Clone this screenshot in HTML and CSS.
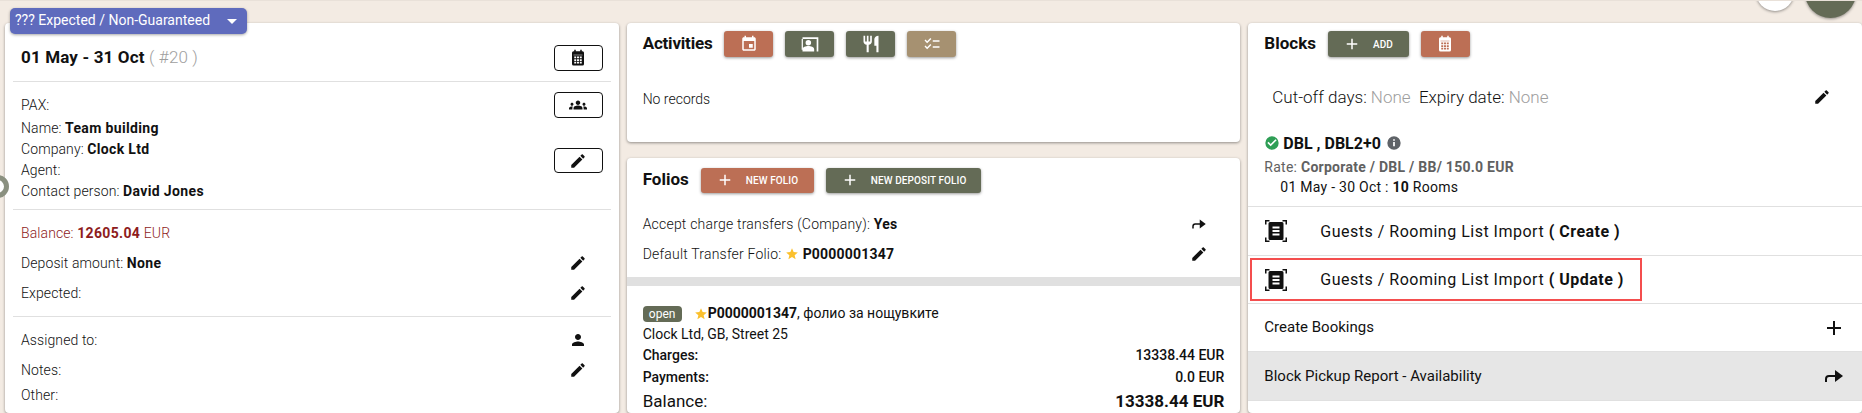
FILE: index.html
```html
<!DOCTYPE html>
<html lang="en">
<head>
<meta charset="utf-8">
<title>Group reservation</title>
<link rel="stylesheet" href="styles.css">
</head>
<body>
<svg class="defs" aria-hidden="true">
  <symbol id="i-edit" viewBox="0 0 24 24"><path d="M3 17.25V21h3.75L17.81 9.94l-3.75-3.75L3 17.25zM20.71 7.04c.39-.39.39-1.02 0-1.41l-2.34-2.34c-.39-.39-1.02-.39-1.41 0l-1.83 1.83 3.75 3.75 1.83-1.83z"/></symbol>
  <symbol id="i-person" viewBox="0 0 24 24"><path d="M12 12c2.21 0 4-1.79 4-4s-1.79-4-4-4-4 1.79-4 4 1.79 4 4 4zm0 2c-2.67 0-8 1.34-8 4v2h16v-2c0-2.66-5.33-4-8-4z"/></symbol>
  <symbol id="i-groups" viewBox="0 0 24 24"><path d="M12 12.75c1.63 0 3.07.39 4.24.9 1.08.48 1.76 1.56 1.76 2.73V18H6v-1.61c0-1.18.68-2.26 1.76-2.73 1.17-.52 2.61-.91 4.24-.91zM4 13c1.1 0 2-.9 2-2s-.9-2-2-2-2 .9-2 2 .9 2 2 2zm1.13 1.1c-.37-.06-.74-.1-1.13-.1-.99 0-1.93.21-2.78.58C.48 14.9 0 15.62 0 16.43V18h4.5v-1.61c0-.83.23-1.61.63-2.29zM20 13c1.1 0 2-.9 2-2s-.9-2-2-2-2 .9-2 2 .9 2 2 2zm4 3.43c0-.81-.48-1.53-1.22-1.85-.85-.37-1.79-.58-2.78-.58-.39 0-.76.04-1.13.1.4.68.63 1.46.63 2.29V18H24v-1.57zM12 6c1.66 0 3 1.34 3 3s-1.34 3-3 3-3-1.34-3-3 1.34-3 3-3z"/></symbol>
  <symbol id="i-month" viewBox="0 0 24 24"><path fill-rule="evenodd" d="M7 1h2v2h6V1h2v2h1a2 2 0 0 1 2 2v15a2 2 0 0 1-2 2H6a2 2 0 0 1-2-2V5a2 2 0 0 1 2-2h1zM6 7.500v.8h12v-.8zM7 10h2.600v2.400H7zM10.700 10h2.600v2.400h-2.600zM14.400 10H17v2.400h-2.600zM7 13.500h2.600v2.400H7zM10.700 13.500h2.600v2.400h-2.600zM14.400 13.500H17v2.400h-2.600zM7 17h2.600v2.400H7zM10.700 17h2.600v2.400h-2.600zM14.400 17H17v2.400h-2.600z"/></symbol>
  <symbol id="i-event" viewBox="0 0 24 24"><path d="M17 12h-5v5h5v-5zM16 1v2H8V1H6v2H5c-1.110 0-1.990.9-1.990 2L3 19c0 1.100.89 2 2 2h14c1.100 0 2-.9 2-2V5c0-1.100-.9-2-2-2h-1V1h-2zm3 18H5V8h14v11z"/></symbol>
  <symbol id="i-contact" viewBox="0 0 24 24"><path d="M3 4h19v17h-2V6H3z"/><circle cx="10" cy="10.500" r="3.300"/><path d="M3 21v-2.500c0-2.800 4-4 7-4s7 1.200 7 4V21z"/><path d="M2 6h1.500v13H2z"/></symbol>
  <symbol id="i-food" viewBox="0 0 24 24"><path d="M11 9H9V2H7v7H5V2H3v7c0 2.120 1.660 3.840 3.750 3.970V22h2.500v-9.030C11.340 12.840 13 11.120 13 9V2h-2v7zm5-3v8h2.500v8H21V2c-2.760 0-5 2.240-5 4z"/></symbol>
  <symbol id="i-check" viewBox="0 0 24 24"><path d="M22 7h-9v2h9V7zm0 8h-9v2h9v-2zM5.540 11 2 7.460l1.410-1.410 2.120 2.120 4.240-4.240 1.410 1.410L5.540 11zm0 8L2 15.460l1.410-1.410 2.120 2.120 4.240-4.240 1.410 1.410L5.540 19z"/></symbol>
  <symbol id="i-plus" viewBox="0 0 24 24"><path d="M19 13h-6v6h-2v-6H5v-2h6V5h2v6h6v2z"/></symbol>
  <symbol id="i-turn" viewBox="0 0 24 24"><path d="M3 18v-3a4 4 0 0 1 4-4h7v2H7a2 2 0 0 0-2 2v3z"/><path d="M13 6l8 6-8 6z"/></symbol>
  <symbol id="i-star" viewBox="0 0 24 24"><path d="M12 17.270 18.180 21l-1.640-7.030L22 9.240l-7.190-.61L12 2 9.190 8.630 2 9.240l5.460 4.730L5.820 21z"/></symbol>
  <symbol id="i-ok" viewBox="0 0 24 24"><path d="M12 2a10 10 0 1 0 0 20 10 10 0 0 0 0-20zm-2 15-5-5 1.800-1.800L10 13.400l7.200-7.200L19 8z"/></symbol>
  <symbol id="i-info" viewBox="0 0 24 24"><path d="M12 2a10 10 0 1 0 0 20 10 10 0 0 0 0-20zm1.300 15h-2.600v-6.500h2.600zm0-8.200h-2.600V6.300h2.600z"/></symbol>
  <symbol id="i-scan" viewBox="0 0 24 24"><path d="M1 5.500V1h4.500v1.500h-3v3zM18.500 1H23v4.500h-1.500v-3h-3zM1 18.500h1.500v3h3V23H1zM21.500 18.500H23V23h-4.500v-1.500h3z"/><path fill-rule="evenodd" d="M6 3h12a1.500 1.500 0 0 1 1.500 1.500v15A1.500 1.500 0 0 1 18 21H6a1.500 1.500 0 0 1-1.500-1.500v-15A1.500 1.500 0 0 1 6 3zm2.500 4.500v2h7v-2zm0 3.500v2h7v-2zm0 3.500v2h7v-2z"/></symbol>
</svg>

<div class="ring"></div>
<div class="fab fab-white"></div>
<div class="fab fab-green"></div>
<div class="status">??? Expected / Non-Guaranteed <span class="caret"></span></div>

<main class="board">
  <section class="col">
    <article class="card card-full">
      <header class="head">
        <h2 class="title">01 May - 31 Oct <span class="muted">( #20 )</span></h2>
        <button class="outline"><svg class="ico18"><use href="#i-month"/></svg></button>
      </header>
      <div class="block block-a">
        <div class="row row-pax"><span>PAX:</span><button class="outline"><svg class="ico18"><use href="#i-groups"/></svg></button></div>
        <div class="split">
          <div>
            <div class="line">Name: <b>Team building</b></div>
            <div class="line">Company: <b>Clock Ltd</b></div>
            <div class="line">Agent:</div>
            <div class="line">Contact person: <b>David Jones</b></div>
          </div>
          <button class="outline outline-edit"><svg class="ico18"><use href="#i-edit"/></svg></button>
        </div>
      </div>
      <div class="block block-b">
        <div class="row row30 red"><span>Balance: <b>12605.04</b> EUR</span></div>
        <div class="row row30"><span>Deposit amount: <b>None</b></span><svg class="ico18 act"><use href="#i-edit"/></svg></div>
        <div class="row row30"><span>Expected:</span><svg class="ico18 act"><use href="#i-edit"/></svg></div>
      </div>
      <div class="block block-c">
        <div class="row row30"><span>Assigned to:</span><svg class="ico18 act"><use href="#i-person"/></svg></div>
        <div class="row row30"><span>Notes:</span><svg class="ico18 act"><use href="#i-edit"/></svg></div>
        <div class="line">Other:</div>
      </div>
    </article>
  </section>

  <section class="col">
    <article class="card card-act">
      <header class="bar">
        <h3 class="bar-title bar-title-tight">Activities</h3>
        <button class="fill terra"><svg class="ico18"><use href="#i-event"/></svg></button>
        <button class="fill moss"><svg class="ico20"><use href="#i-contact"/></svg></button>
        <button class="fill moss"><svg class="ico20"><use href="#i-food"/></svg></button>
        <button class="fill tan"><svg class="ico18"><use href="#i-check"/></svg></button>
      </header>
      <p class="empty">No records</p>
    </article>
    <article class="card card-fol">
      <header class="bar bar-fol">
        <h3 class="bar-title">Folios</h3>
        <button class="fill wide terra wide-a"><svg class="ico18"><use href="#i-plus"/></svg><span>NEW FOLIO</span></button>
        <button class="fill wide moss wide-b"><svg class="ico18"><use href="#i-plus"/></svg><span>NEW DEPOSIT FOLIO</span></button>
      </header>
      <div class="transfers">
        <div class="row row30"><span>Accept charge transfers (Company): <b>Yes</b></span><svg class="ico18"><use href="#i-turn"/></svg></div>
        <div class="row row30"><span>Default Transfer Folio: <svg class="ico14 star"><use href="#i-star"/></svg> <b>P0000001347</b></span><svg class="ico18"><use href="#i-edit"/></svg></div>
      </div>
      <div class="folio">
        <div class="f-top"><span class="pill">open</span><svg class="ico14 star"><use href="#i-star"/></svg><span><b>P0000001347</b>, фолио за нощувките</span></div>
        <div class="f-addr">Clock Ltd, GB, Street 25</div>
        <div class="f-row"><b class="medium">Charges:</b><span class="medium">13338.44 EUR</span></div>
        <div class="f-row"><b class="medium">Payments:</b><span class="medium">0.0 EUR</span></div>
        <div class="f-row f-big"><span>Balance:</span><b>13338.44 EUR</b></div>
      </div>
    </article>
  </section>

  <section class="col">
    <article class="card card-full">
      <header class="bar">
        <h3 class="bar-title">Blocks</h3>
        <button class="fill wide moss wide-c"><svg class="ico18"><use href="#i-plus"/></svg><span>ADD</span></button>
        <button class="fill terra"><svg class="ico18"><use href="#i-month"/></svg></button>
      </header>
      <div class="cutoff">
        <span>Cut-off days: <em>None</em>&nbsp; Expiry date: <em>None</em></span>
        <svg class="ico18"><use href="#i-edit"/></svg>
      </div>
      <div class="rate-head"><svg class="ico16 ok"><use href="#i-ok"/></svg><strong>DBL , DBL2+0</strong><svg class="ico16 info"><use href="#i-info"/></svg></div>
      <div class="rate">Rate: <b>Corporate / DBL / BB/ 150.0 EUR</b></div>
      <div class="dates">01 May - 30 Oct : <b>10</b> Rooms</div>
      <ul class="menu">
        <li class="item item-first"><svg class="ico24"><use href="#i-scan"/></svg><span class="item-text">Guests / Rooming List Import <b>( Create )</b></span></li>
        <li class="item item-mark"><svg class="ico24"><use href="#i-scan"/></svg><span class="item-text">Guests / Rooming List Import <b>( Update )</b></span><i class="redbox"></i></li>
        <li class="item item-between"><span>Create Bookings</span><svg class="ico24"><use href="#i-plus"/></svg></li>
        <li class="item item-between item-hover"><span>Block Pickup Report - Availability</span><svg class="ico24"><use href="#i-turn"/></svg></li>
      </ul>
    </article>
  </section>
</main>
</body>
</html>
```

FILE: styles.css
```css
* { box-sizing: border-box; }

html, body {
  margin: 0;
  height: 413px;
  overflow: hidden;
}

body {
  position: relative;
  background: #f3ebe3;
  border-top: 1px solid #e9e1d9;
  color: #111;
  font: 300 14px/21px Roboto, "Noto Sans", sans-serif;
}

.defs { display: none; }

b, strong { font-weight: 700; }
b.medium, .medium { font-weight: 500; }

svg { fill: currentColor; flex: none; }
.ico14 { width: 14px; height: 14px; vertical-align: -2px; }
.ico16 { width: 16px; height: 16px; }
.ico18 { width: 18px; height: 18px; }
.ico20 { width: 20px; height: 20px; }
.ico24 { width: 24px; height: 24px; }

button {
  display: inline-flex;
  align-items: center;
  justify-content: center;
  padding: 0;
  font: inherit;
  cursor: pointer;
}

/* floating bits */
.status {
  position: absolute;
  z-index: 3;
  left: 10px;
  top: 7px;
  width: 237px;
  height: 26px;
  padding-left: 5px;
  background: #5f6bbd;
  border-radius: 5px;
  box-shadow: 0 1px 3px rgba(0, 0, 0, .35);
  color: #fff;
  font-weight: 400;
  line-height: 25px;
  white-space: nowrap;
}

.caret {
  display: inline-block;
  margin-left: 13px;
  border: 5px solid transparent;
  border-top-color: #fff;
  border-bottom-width: 0;
  vertical-align: middle;
}

.ring {
  position: absolute;
  z-index: 3;
  left: -14px;
  top: 174px;
  width: 23px;
  height: 23px;
  border: 5px solid #8a9080;
  border-radius: 50%;
  background: #fff;
}

.fab {
  position: absolute;
  border-radius: 50%;
  box-shadow: 0 1px 3px rgba(0, 0, 0, .4);
}
.fab-white { left: 1756px; top: -28px; width: 38px; height: 38px; background: #fff; }
.fab-green { left: 1805px; top: -34px; width: 51px; height: 51px; background: #646b56; }

/* board */
.board {
  display: grid;
  grid-template-columns: repeat(3, minmax(0, 1fr));
  column-gap: 8px;
  align-items: start;
  padding: 22px 0 0 5px;
}

.col { display: flex; flex-direction: column; gap: 16px; }

.card {
  background: #fff;
  border-radius: 4px;
  box-shadow: 0 1px 3px rgba(0, 0, 0, .4);
}
.card-full { height: 390px; }
.card-act { height: 119px; }
.card-fol { height: 255px; }

/* left card */
.head {
  display: flex;
  align-items: center;
  justify-content: space-between;
  margin: 0 8px;
  padding: 22px 8px 10px 8px;
  border-bottom: 1px solid #e0e0e0;
}

.title { margin: 0 0 2px; font-size: 17px; font-weight: 700; line-height: 24px; letter-spacing: .15px; color: #111; }
.muted { font-weight: 300; color: #9e9e9e; }

.outline {
  width: 49px;
  height: 26px;
  background: #fff;
  border: 1px solid #111;
  border-radius: 4px;
  color: #111;
}
.outline-edit { height: 25px; margin-top: 30px; }

.block {
  margin: 0 8px;
  padding-left: 8px;
  padding-right: 8px;
  border-bottom: 1px solid #e0e0e0;
  letter-spacing: .1px;
}
.block b { letter-spacing: .35px; }
.block-a { padding-top: 10px; padding-bottom: 7px; }
.block-b { padding-top: 8px; padding-bottom: 8px; }
.block-c { padding-top: 8px; border-bottom: 0; }

.row { display: flex; align-items: center; justify-content: space-between; }
.row-pax { height: 26px; }
.row30 { height: 30px; }
.split { display: flex; align-items: flex-start; justify-content: space-between; }
.line { height: 21px; }
.red { color: #8e1c1c; }
.act { margin-right: 16px; }

/* middle card */
.bar { display: flex; align-items: center; gap: 12px; padding: 8px 0 0 16px; }
.bar-title { margin: 0 0 2px; font-size: 17px; font-weight: 700; line-height: 24px; color: #111; }
.bar-title-tight { letter-spacing: -.2px; }
.bar-fol { padding-top: 9px; }

.fill {
  width: 49px;
  height: 26px;
  border: 0;
  border-radius: 3px;
  box-shadow: 0 1px 3px rgba(0, 0, 0, .4);
  color: #fff;
}
.terra { background: #bc6f55; }
.moss { background: #646b56; }
.tan { background: #a69171; }

.wide { height: 25px; justify-content: flex-start; gap: 12px; padding-left: 15px; font-size: 10px; font-weight: 500; letter-spacing: .1px; }
.wide-a { width: 113px; }
.wide-b { width: 155px; }
.wide-c { width: 81px; height: 26px; }

.empty { margin: 0; padding: 32px 0 0 16px; }

.transfers { padding: 16px 32px 0 16px; letter-spacing: .2px; }
.star { fill: #fbc02d; }

.folio { margin-top: 8px; padding: 17px 16px 0; border-top: 9px solid #e0e0e0; }
.f-top { display: flex; align-items: center; height: 21px; font-weight: 400; }
.pill {
  width: 39px;
  height: 16px;
  margin-right: 12px;
  background: #646b56;
  border-radius: 4px;
  color: #fff;
  font-size: 12px;
  line-height: 16px;
  text-align: center;
}
.f-addr { height: 20px; font-weight: 400; }
.f-row { display: flex; justify-content: space-between; height: 22px; line-height: 22px; }
.f-big { margin-top: 1px; font-size: 17px; font-weight: 400; line-height: 24px; height: 24px; }

/* right card */
.cutoff {
  display: flex;
  align-items: center;
  justify-content: space-between;
  height: 26px;
  margin-top: 27px;
  padding: 0 31px 0 24px;
  font-size: 17px;
}
.cutoff em { font-style: normal; color: #9e9e9e; }

.rate-head { display: flex; align-items: center; gap: 3px; height: 24px; margin-top: 21px; margin-bottom: 1px; padding-left: 16px; }
.rate-head strong { margin-right: 2px; font-size: 16px; }
.ok { fill: #2e9e55; }
.info { fill: #5f6368; }
.rate { height: 22px; padding-left: 16px; line-height: 22px; color: #616161; font-weight: 400; letter-spacing: .26px; }
.dates { height: 19px; padding-left: 32px; line-height: 19px; font-weight: 400; letter-spacing: .26px; }

.menu { margin: 9px 0 0; padding: 0; list-style: none; border-top: 1px solid #e0e0e0; }
.item {
  position: relative;
  display: flex;
  align-items: center;
  height: 48px;
  padding: 0 16px;
  border-bottom: 1px solid #e0e0e0;
  font-weight: 400;
  font-size: 15px;
}
.item-first { height: 49px; }
.item-text { margin-left: 32px; font-size: 16px; letter-spacing: .5px; }
.item-between { justify-content: space-between; }
.item-hover { height: 49px; background: #e6e6e6; }

.redbox {
  position: absolute;
  left: 2px;
  top: 2px;
  width: 392px;
  height: 43px;
  border: 2px solid #f44e4e;
}
```
